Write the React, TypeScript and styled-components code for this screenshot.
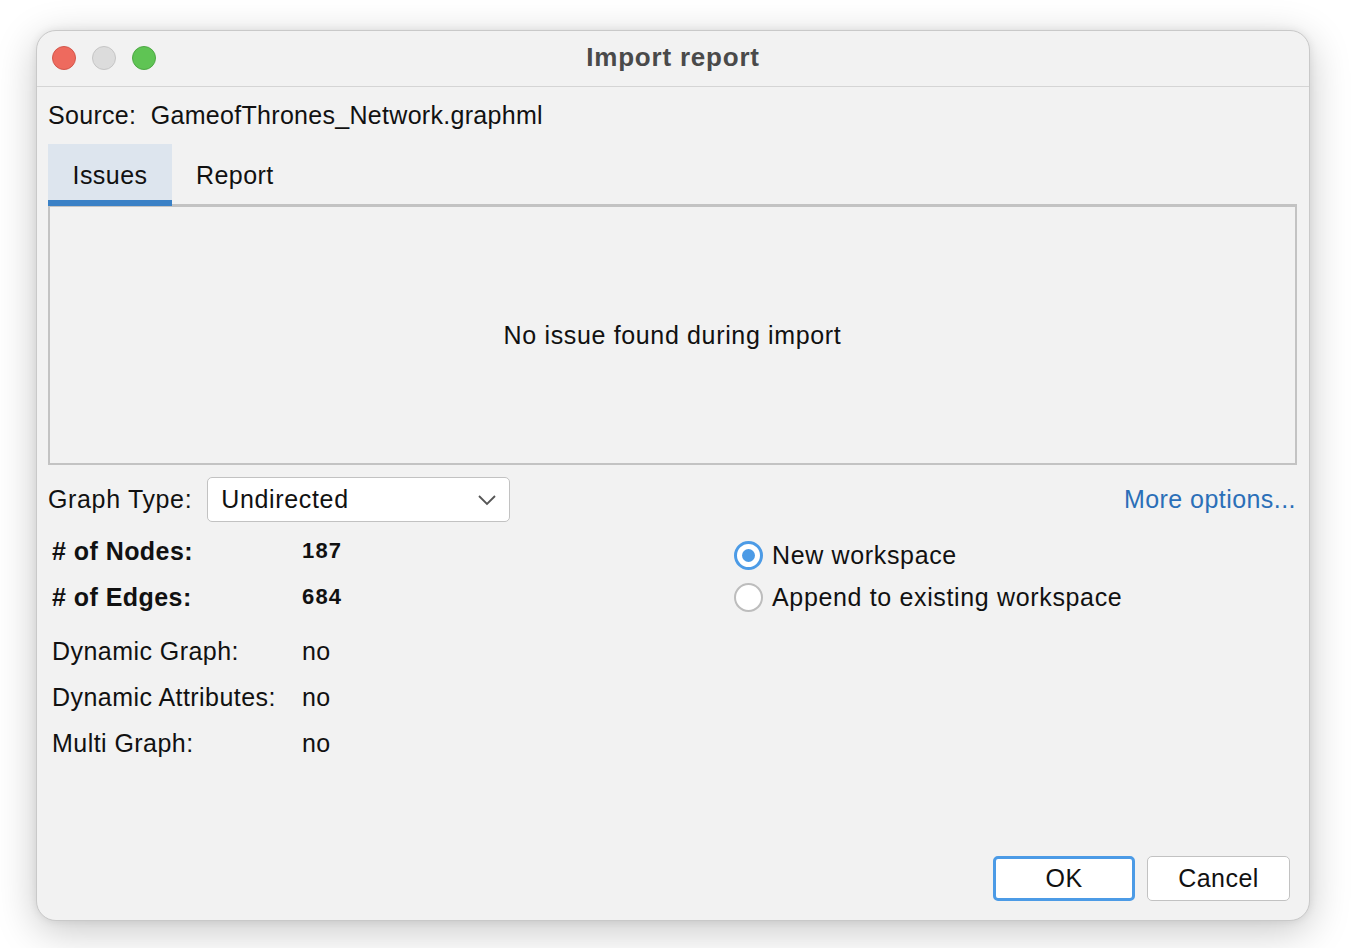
import React from "react";
import styled, { createGlobalStyle } from "styled-components";

const Global = createGlobalStyle`
  html, body { margin: 0; padding: 0; background: #ffffff; }
  body { font-family: "Liberation Sans", Arial, Helvetica, sans-serif; color: #111; }
`;

const Page = styled.div`
  width: 1358px;
  height: 948px;
  padding: 30px 0 0 36px;
  box-sizing: border-box;
  overflow: hidden;
`;

const Window = styled.div`
  width: 1274px;
  height: 891px;
  box-sizing: border-box;
  background: #f2f2f2;
  border: 1px solid #c9c9c9;
  border-radius: 20px;
  box-shadow: 0 10px 40px rgba(0, 0, 0, 0.22), 0 0 8px rgba(0, 0, 0, 0.08);
  display: flex;
  flex-direction: column;
  overflow: hidden;
  font-size: 25px;
  letter-spacing: 0.65px;
`;

const TitleBar = styled.div`
  height: 55px;
  flex: none;
  border-bottom: 1px solid #d5d5d5;
  display: flex;
  align-items: center;
  position: relative;
  padding-left: 15px;
`;

const Lights = styled.div`
  display: flex;
  gap: 16px;
  margin-top: -1px;
`;

const Light = styled.span<{ $c: string; $b: string }>`
  width: 24px;
  height: 24px;
  border-radius: 50%;
  background: ${(p) => p.$c};
  box-sizing: border-box;
  border: 1px solid ${(p) => p.$b};
`;

const Title = styled.div`
  position: absolute;
  left: 0;
  right: 0;
  top: 0;
  bottom: 3px;
  display: flex;
  align-items: center;
  justify-content: center;
  font-size: 26px;
  font-weight: 700;
  letter-spacing: 0.8px;
  color: #4a4a4a;
  pointer-events: none;
`;

const Body = styled.div`
  flex: 1;
  display: flex;
  flex-direction: column;
  padding: 0 12px 19px 11px;
`;

const SourceRow = styled.div`
  height: 57px;
  display: flex;
  align-items: center;
  white-space: pre;
  letter-spacing: 0.3px;
`;

const TabBar = styled.div`
  display: flex;
  height: 62px;
  box-sizing: border-box;
`;

const Tab = styled.div<{ $active?: boolean }>`
  width: ${(p) => (p.$active ? "124px" : "auto")};
  padding: ${(p) => (p.$active ? "6px 0 0 0" : "6px 0 0 24px")};
  display: flex;
  align-items: center;
  justify-content: ${(p) => (p.$active ? "center" : "flex-start")};
  background: ${(p) => (p.$active ? "#dde5ee" : "transparent")};
  border-bottom: 6px solid ${(p) => (p.$active ? "#3b81c6" : "transparent")};
  box-sizing: border-box;
  letter-spacing: 0.45px;
  position: relative;
  z-index: 1;
`;

const Panel = styled.div`
  margin-top: -2px;
  height: 261px;
  box-sizing: border-box;
  border: 2px solid #c3c3c3;
  border-top-width: 3px;
  display: flex;
  align-items: center;
  justify-content: center;
`;

const TypeRow = styled.div`
  margin-top: 12px;
  display: flex;
  align-items: center;
`;

const Select = styled.div`
  margin-left: 15px;
  width: 303px;
  height: 45px;
  box-sizing: border-box;
  background: #ffffff;
  border: 1px solid #c2c2c2;
  border-radius: 5px;
  display: flex;
  align-items: center;
  justify-content: space-between;
  padding: 0 12px 0 13px;
`;

const MoreLink = styled.a`
  margin-left: auto;
  color: #2b6fb8;
  text-decoration: none;
  padding-right: 1px;
  letter-spacing: 0.45px;
`;

const Lower = styled.div`
  display: flex;
  margin-top: 6px;
`;

const Stats = styled.div`
  width: 682px;
  padding-left: 4px;
  display: grid;
  grid-template-columns: 250px 1fr;
  grid-auto-rows: 46px;
  align-items: center;
  letter-spacing: 0.45px;
`;

const StatLabel = styled.div<{ $bold?: boolean; $gap?: boolean }>`
  font-weight: ${(p) => (p.$bold ? 700 : 400)};
  margin-top: ${(p) => (p.$gap ? "16px" : "0")};
`;

const StatValue = styled.div<{ $bold?: boolean; $gap?: boolean }>`
  font-weight: ${(p) => (p.$bold ? 700 : 400)};
  font-size: ${(p) => (p.$bold ? "22px" : "25px")};
  letter-spacing: ${(p) => (p.$bold ? "1.2px" : "0.45px")};
  margin-top: ${(p) => (p.$gap ? "16px" : "0")};
`;

const Radios = styled.div`
  display: flex;
  flex-direction: column;
  gap: 14px;
  padding-top: 13px;
`;

const RadioRow = styled.label`
  display: flex;
  align-items: center;
  gap: 9px;
  height: 28px;
`;

const RadioCircle = styled.span<{ $on?: boolean }>`
  width: 29px;
  height: 29px;
  box-sizing: border-box;
  border-radius: 50%;
  background: #ffffff;
  border: ${(p) => (p.$on ? "3px solid #4c9be6" : "2px solid #bdbdbd")};
  display: flex;
  align-items: center;
  justify-content: center;
  &::after {
    content: "";
    display: ${(p) => (p.$on ? "block" : "none")};
    width: 13px;
    height: 13px;
    border-radius: 50%;
    background: #4c9be6;
  }
`;

const Footer = styled.div`
  margin-top: auto;
  display: flex;
  justify-content: flex-end;
  gap: 12px;
  padding-right: 7px;
`;

const Button = styled.button<{ $primary?: boolean }>`
  width: ${(p) => (p.$primary ? "142px" : "143px")};
  height: 45px;
  box-sizing: border-box;
  background: #ffffff;
  border: ${(p) => (p.$primary ? "3px solid #4c9be6" : "1px solid #c2c2c2")};
  border-radius: 5px;
  font-family: "Liberation Sans", Arial, sans-serif;
  font-size: 25px;
  letter-spacing: 0.45px;
  color: #111;
  padding: 0;
`;

export default function App() {
  return (
    <>
      <Global />
      <Page>
        <Window>
          <TitleBar>
            <Lights>
              <Light $c="#ee6a5e" $b="#d2574c" />
              <Light $c="#dcdcdc" $b="#c5c5c5" />
              <Light $c="#5fc454" $b="#4ea845" />
            </Lights>
            <Title>Import report</Title>
          </TitleBar>
          <Body>
            <SourceRow>{"Source:  GameofThrones_Network.graphml"}</SourceRow>
            <TabBar>
              <Tab $active>Issues</Tab>
              <Tab>Report</Tab>
            </TabBar>
            <Panel>No issue found during import</Panel>
            <TypeRow>
              Graph Type:
              <Select>
                <span>Undirected</span>
                <svg width="20" height="12" viewBox="0 0 20 12">
                  <path d="M2 2 L10 10 L18 2" fill="none" stroke="#555" strokeWidth="1.8" />
                </svg>
              </Select>
              <MoreLink href="#">More options...</MoreLink>
            </TypeRow>
            <Lower>
              <Stats>
                <StatLabel $bold># of Nodes:</StatLabel>
                <StatValue $bold>187</StatValue>
                <StatLabel $bold># of Edges:</StatLabel>
                <StatValue $bold>684</StatValue>
                <StatLabel $gap>Dynamic Graph:</StatLabel>
                <StatValue $gap>no</StatValue>
                <StatLabel $gap>Dynamic Attributes:</StatLabel>
                <StatValue $gap>no</StatValue>
                <StatLabel $gap>Multi Graph:</StatLabel>
                <StatValue $gap>no</StatValue>
              </Stats>
              <Radios>
                <RadioRow>
                  <RadioCircle $on />
                  New workspace
                </RadioRow>
                <RadioRow>
                  <RadioCircle />
                  Append to existing workspace
                </RadioRow>
              </Radios>
            </Lower>
            <Footer>
              <Button $primary>OK</Button>
              <Button>Cancel</Button>
            </Footer>
          </Body>
        </Window>
      </Page>
    </>
  );
}
